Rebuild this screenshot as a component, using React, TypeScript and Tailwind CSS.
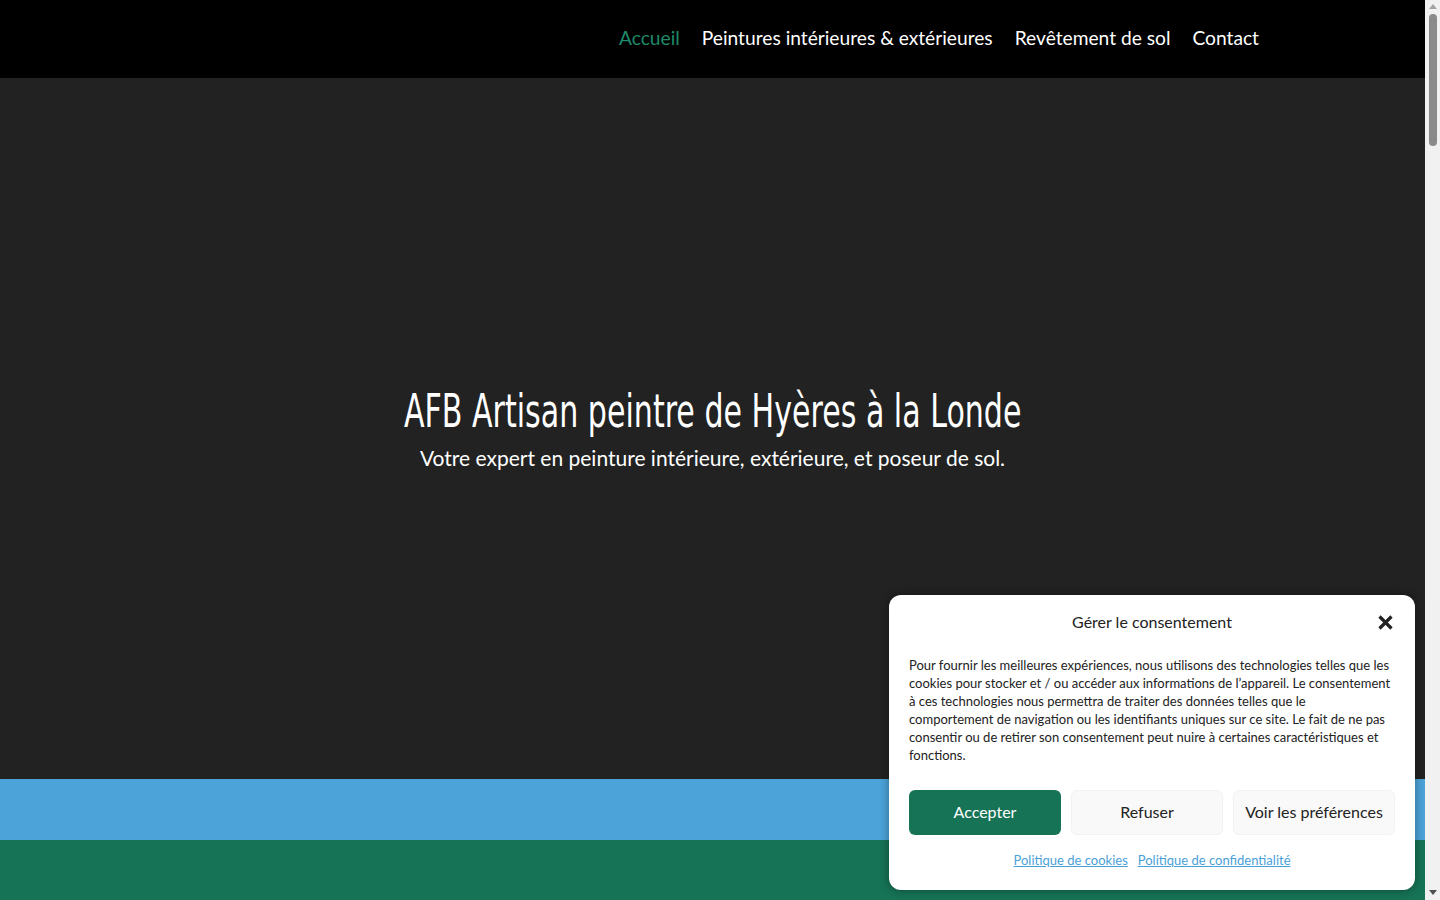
import React from 'react';

const navItems = [
  { label: 'Accueil', active: true },
  { label: 'Peintures intérieures & extérieures', active: false },
  { label: 'Revêtement de sol', active: false },
  { label: 'Contact', active: false },
];

const ConsentBanner = () => {
  return (
    <div className="absolute right-[10px] bottom-[10px] w-[526px] rounded-xl bg-white px-5 pt-[16px] pb-[20px] shadow-[0_0_10px_rgba(0,0,0,0.4)] font-['Lato',sans-serif] text-[#222]">
      <div className="relative flex items-center justify-center h-[22px]">
        <span className="text-[16px]">Gérer le consentement</span>
        <button className="absolute right-[2px] top-[4px] text-[#222]">
          <svg width="15" height="15" viewBox="0 0 15 15">
            <path d="M1.5 1.5 L13.5 13.5 M13.5 1.5 L1.5 13.5" stroke="#222" strokeWidth="3.2" />
          </svg>
        </button>
      </div>
      <p className="mt-[23px] w-[482px] text-[13px] leading-[18px] text-[#222]">
        Pour fournir les meilleures expériences, nous utilisons des technologies telles que les cookies pour stocker et / ou accéder aux informations de l’appareil. Le consentement à ces technologies nous permettra de traiter des données telles que le comportement de navigation ou les identifiants uniques sur ce site. Le fait de ne pas consentir ou de retirer son consentement peut nuire à certaines caractéristiques et fonctions.
      </p>
      <div className="mt-[26px] grid grid-cols-[152px_152px_1fr] gap-[10px]">
        <button className="h-[45px] rounded-md bg-[#167356] text-white text-[16px]">Accepter</button>
        <button className="h-[45px] rounded-md bg-[#f9f9f9] border border-[#f2f2f2] text-[#222] text-[16px]">Refuser</button>
        <button className="h-[45px] rounded-md bg-[#f9f9f9] border border-[#f2f2f2] text-[#222] text-[16px]">Voir les préférences</button>
      </div>
      <div className="mt-[16px] flex justify-center gap-[10px] text-[13px] text-[#4a9fd8]">
        <a className="underline">Politique de cookies</a>
        <a className="underline">Politique de confidentialité</a>
      </div>
    </div>
  );
};

const App = () => {
  return (
    <div className="flex h-[900px] w-[1440px] overflow-hidden">
      <div className="relative flex w-[1425px] flex-col">
        <header className="flex h-[78px] items-center justify-end bg-black pr-[166px] pb-[2px]">
          <nav className="flex gap-[22px] font-['Lato',sans-serif] text-[19.2px]">
            {navItems.map((item) => (
              <a key={item.label} className={item.active ? 'text-[#1e8a68]' : 'text-white'}>
                {item.label}
              </a>
            ))}
          </nav>
        </header>
        <section className="flex h-[701px] flex-col items-center justify-center bg-[#222222] text-white">
          <h1 className="scale-x-[0.727] whitespace-nowrap font-['DejaVu_Sans',sans-serif] font-stretch-condensed text-[46px] leading-[54px] font-normal">
            AFB Artisan peintre de Hyères à la Londe
          </h1>
          <p className="mt-[5px] font-['Lato',sans-serif] text-[21px] leading-[30px]">
            Votre expert en peinture intérieure, extérieure, et poseur de sol.
          </p>
        </section>
        <div className="h-[61px] bg-[#4ca3d9]" />
        <div className="h-[60px] bg-[#167356]" />
        <ConsentBanner />
      </div>
      <div className="flex w-[15px] flex-col items-center bg-[#f1f1f1]">
        <div className="mt-[4px] h-0 w-0 border-x-[4px] border-b-[5px] border-x-transparent border-b-[#a3a3a3]" />
        <div className="mt-[5px] h-[132px] w-[8px] rounded-full bg-[#8a8a8a]" />
        <div className="flex-1" />
        <div className="mb-[5px] h-0 w-0 border-x-[4px] border-t-[5px] border-x-transparent border-t-[#505050]" />
      </div>
    </div>
  );
};

export default App;
